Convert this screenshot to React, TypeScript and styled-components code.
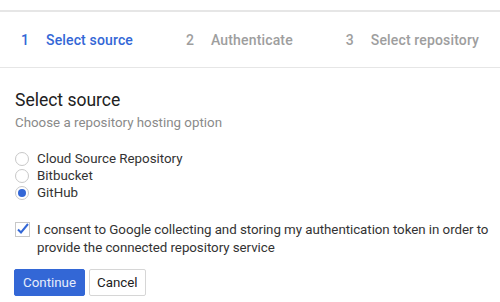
import React, { useState } from "react";
import styled, { createGlobalStyle } from "styled-components";

const Global = createGlobalStyle`
  html, body { margin: 0; padding: 0; background: #fff; }
  body { font-family: Roboto, "Noto Sans", Arial, sans-serif; color: #212121; -webkit-font-smoothing: antialiased; }
  * { box-sizing: border-box; }
`;

const Page = styled.div`
  padding-top: 10px;
  width: 500px;
`;

const Stepper = styled.nav`
  display: flex;
  align-items: center;
  height: 58px;
  border-top: 2px solid #e6e6e6;
  border-bottom: 1px solid #e6e6e6;
  padding-left: 21px;
  gap: 53px;
`;

const Step = styled.div<{ $active?: boolean }>`
  display: flex;
  align-items: center;
  font-size: 14px;
  font-weight: 500;
  letter-spacing: 0.15px;
  line-height: 20px;
  color: ${(p) => (p.$active ? "#3367d6" : "#9e9e9e")};
`;

const StepNum = styled.span`
  width: 25px;
`;

const Body = styled.div`
  padding: 20px 3px 0 15px;
`;

const Title = styled.h2`
  margin: 0;
  font-size: 17.5px;
  font-weight: 400;
  line-height: 24px;
  color: #212121;
`;

const Subtitle = styled.p`
  margin: 1px 0 0;
  font-size: 13.33px;
  line-height: 20px;
  color: #8a8a8a;
`;

const RadioList = styled.div`
  display: flex;
  flex-direction: column;
  margin-top: 17px;
`;

const RadioRow = styled.label`
  display: flex;
  align-items: center;
  height: 17px;
  font-size: 13.33px;
  color: #333;
  cursor: pointer;
`;

const RadioCircle = styled.span<{ $checked?: boolean }>`
  width: 14px;
  height: 14px;
  border-radius: 50%;
  border: 1px solid #c8c8c8;
  margin-right: 8px;
  display: flex;
  align-items: center;
  justify-content: center;
  &::after {
    content: "";
    width: 8px;
    height: 8px;
    border-radius: 50%;
    background: ${(p) => (p.$checked ? "#3367d6" : "transparent")};
  }
`;

const ConsentRow = styled.label`
  display: flex;
  align-items: flex-start;
  margin-top: 20px;
  font-size: 13.33px;
  letter-spacing: -0.05px;
  line-height: 18px;
  color: #333;
`;

const CheckBox = styled.span`
  flex: none;
  width: 15px;
  height: 15px;
  margin: 1px 7px 0 0;
  display: flex;
`;

const Buttons = styled.div`
  display: flex;
  gap: 4px;
  margin-top: 12px;
  margin-left: -1px;
`;

const Button = styled.button<{ $primary?: boolean }>`
  height: 27px;
  padding: 0 ${(p) => (p.$primary ? "8px" : "7px")};
  border-radius: 2px;
  font-family: Roboto, Arial, sans-serif;
  font-size: 13.33px;
  border: 1px solid ${(p) => (p.$primary ? "#3367d6" : "#d6d6d6")};
  background: ${(p) => (p.$primary ? "#3367d6" : "#fff")};
  color: ${(p) => (p.$primary ? "#e6edfb" : "#212121")};
  cursor: pointer;
`;

const options = ["Cloud Source Repository", "Bitbucket", "GitHub"];

export default function App() {
  const [sel, setSel] = useState(2);
  return (
    <Page>
      <Global />
      <Stepper>
        <Step $active>
          <StepNum>1</StepNum>Select source
        </Step>
        <Step>
          <StepNum>2</StepNum>Authenticate
        </Step>
        <Step>
          <StepNum>3</StepNum>Select repository
        </Step>
      </Stepper>
      <Body>
        <Title>Select source</Title>
        <Subtitle>Choose a repository hosting option</Subtitle>
        <RadioList>
          {options.map((o, i) => (
            <RadioRow key={o} onClick={() => setSel(i)}>
              <RadioCircle $checked={sel === i} />
              {o}
            </RadioRow>
          ))}
        </RadioList>
        <ConsentRow>
          <CheckBox>
            <svg width="15" height="15" viewBox="0 0 15 15">
              <rect x="0.5" y="0.5" width="14" height="14" fill="#fff" stroke="#c8c8c8" />
              <path d="M3 7.5 L6 10.5 L13 2" fill="none" stroke="#3367d6" strokeWidth="2" />
            </svg>
          </CheckBox>
          <span>
            I consent to Google collecting and storing my authentication token in order to
            provide the connected repository service
          </span>
        </ConsentRow>
        <Buttons>
          <Button $primary>Continue</Button>
          <Button>Cancel</Button>
        </Buttons>
      </Body>
    </Page>
  );
}
